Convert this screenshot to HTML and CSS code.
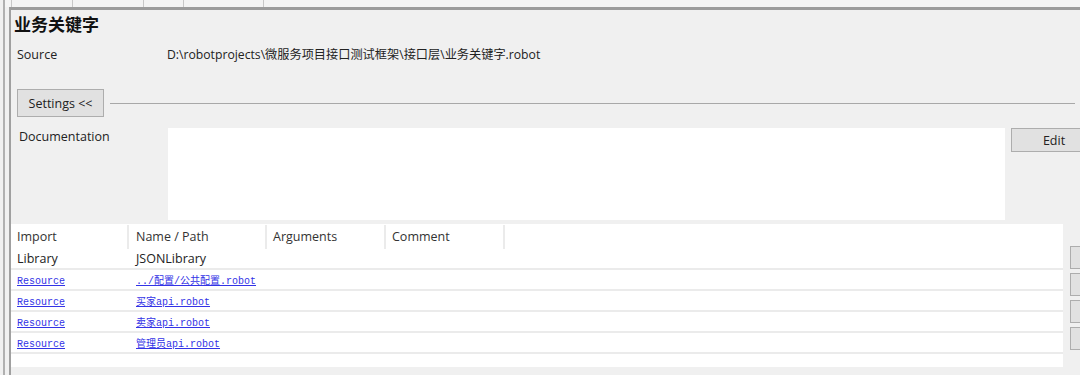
FILE: index.html
```html
<!DOCTYPE html>
<html lang="zh">
<head>
<meta charset="utf-8">
<title>业务关键字</title>
<link rel="stylesheet" href="styles.css">
</head>
<body>
<div class="tabs">
  <span class="tab t1"></span>
  <span class="tab t2"></span>
  <span class="tab t3"></span>
  <span class="tab t4"></span>
  <span class="tab t5"></span>
</div>
<div class="window">
  <div class="panel">
    <h1 class="title">业务关键字</h1>
    <div class="row source-row">
      <span class="label">Source</span>
      <span class="path">D:\robotprojects\微服务项目接口测试框架\接口层\业务关键字.robot</span>
    </div>
    <div class="settings-row">
      <button class="btn settings">Settings &lt;&lt;</button>
      <div class="rule"></div>
    </div>
    <div class="doc-row">
      <span class="label doc-label">Documentation</span>
      <div class="doc-box"></div>
      <button class="btn edit">Edit</button>
    </div>
    <div class="imports">
      <div class="grid">
        <div class="tr head">
          <div class="th">Import</div>
          <div class="th">Name / Path</div>
          <div class="th">Arguments</div>
          <div class="th">Comment</div>
          <div class="th last"></div>
        </div>
        <div class="tr lib">
          <div class="td">Library</div>
          <div class="td">JSONLibrary</div>
          <div class="td"></div>
          <div class="td"></div>
          <div class="td"></div>
        </div>
        <div class="tr res">
          <div class="td"><a class="link" href="#">Resource</a></div>
          <div class="td"><a class="link" href="#">../配置/公共配置.robot</a></div>
          <div class="td"></div>
          <div class="td"></div>
          <div class="td"></div>
        </div>
        <div class="tr res">
          <div class="td"><a class="link" href="#">Resource</a></div>
          <div class="td"><a class="link" href="#">买家api.robot</a></div>
          <div class="td"></div>
          <div class="td"></div>
          <div class="td"></div>
        </div>
        <div class="tr res">
          <div class="td"><a class="link" href="#">Resource</a></div>
          <div class="td"><a class="link" href="#">卖家api.robot</a></div>
          <div class="td"></div>
          <div class="td"></div>
          <div class="td"></div>
        </div>
        <div class="tr res">
          <div class="td"><a class="link" href="#">Resource</a></div>
          <div class="td"><a class="link" href="#">管理员api.robot</a></div>
          <div class="td"></div>
          <div class="td"></div>
          <div class="td"></div>
        </div>
      </div>
      <div class="side">
        <button class="btn side-btn"></button>
        <button class="btn side-btn"></button>
        <button class="btn side-btn"></button>
        <button class="btn side-btn"></button>
      </div>
    </div>
  </div>
</div>
</body>
</html>
```

FILE: styles.css
```css
* { box-sizing: border-box; }
html, body {
  margin: 0;
  padding: 0;
  width: 1080px;
  height: 375px;
  overflow: hidden;
  background: #f0f0f0;
  font-family: "Open Sans", "Noto Sans CJK SC", sans-serif;
  font-size: 12.5px;
  color: #222;
}
.tabs {
  display: flex;
  height: 7px;
  background: #f4f4f4;
  margin-left: 3px;
  border-left: 2px solid #b0b0b0;
}
.tab { height: 7px; border-right: 1px solid #c8c8c8; }
.t1 { width: 7px; }
.t2 { width: 61px; }
.t3 { width: 71px; }
.t4 { width: 40px; }
.t5 { width: 80px; }
.window {
  margin-left: 3px;
  border-left: 2px solid #b0b0b0;
  padding-left: 4px;
  height: 368px;
}
.panel {
  border-left: 2px solid #a0a0a0;
  border-top: 3px solid #9c9c9c;
  height: 368px;
  display: flex;
  flex-direction: column;
  overflow: hidden;
}
.title {
  margin: 3px 0 0 3px;
  font-family: "Noto Sans CJK SC", sans-serif;
  font-size: 17px;
  font-weight: bold;
  line-height: 22px;
  color: #111;
}
.row { display: flex; }
.label { width: 150px; flex: none; }
.source-row {
  margin: 11px 0 0 6px;
  line-height: 18px;
}
.path { font-size: 12.2px; }
.settings-row {
  display: flex;
  align-items: center;
  margin: 25px 0 0 6px;
  height: 28px;
}
.btn {
  font: inherit;
  color: #222;
  background: #e1e1e1;
  border: 1px solid #adadad;
  padding: 0;
  margin: 0;
}
.settings { width: 87px; height: 28px; flex: none; }
.rule {
  flex: 1;
  height: 1px;
  background: #a8a8a8;
  margin: 0 5px 0 6px;
}
.doc-row {
  display: flex;
  margin: 11px 0 0 8px;
  height: 92px;
}
.doc-label { width: 149px; line-height: 18px; }
.doc-box {
  flex: none;
  width: 837px;
  height: 92px;
  background: #fff;
}
.edit {
  margin-left: 6px;
  width: 86px;
  height: 24px;
  flex: none;
}
.imports {
  display: flex;
  margin-top: 4px;
}
.grid {
  flex: none;
  width: 1052px;
  height: 143px;
  background: #fff;
}
.tr {
  display: grid;
  grid-template-columns: 118px 138px 119px 119px 1fr;
}
.head { height: 24px; }
.th {
  color: #333;
  padding-left: 6px;
  line-height: 24px;
  border-right: 2px solid #ebebeb;
  margin-top: 1px;
}
.th:nth-child(2) { padding-left: 7px; }
.th.last { border-right: none; }
.lib { height: 22px; border-bottom: 2px solid #ebebeb; }
.td { padding-left: 6px; line-height: 21px; }
.td:nth-child(2) { padding-left: 7px; }
.res { height: 21px; border-bottom: 2px solid #ebebeb; }
.res .td { line-height: 19px; }
.link {
  font-family: "Liberation Mono", "Noto Sans CJK SC", monospace;
  font-size: 10px;
  color: #3333e6;
  text-decoration: underline;
}
.side {
  flex: none;
  display: flex;
  flex-direction: column;
  gap: 4px;
  margin: 22px 0 0 7px;
}
.side-btn { width: 24px; height: 23px; }
```
